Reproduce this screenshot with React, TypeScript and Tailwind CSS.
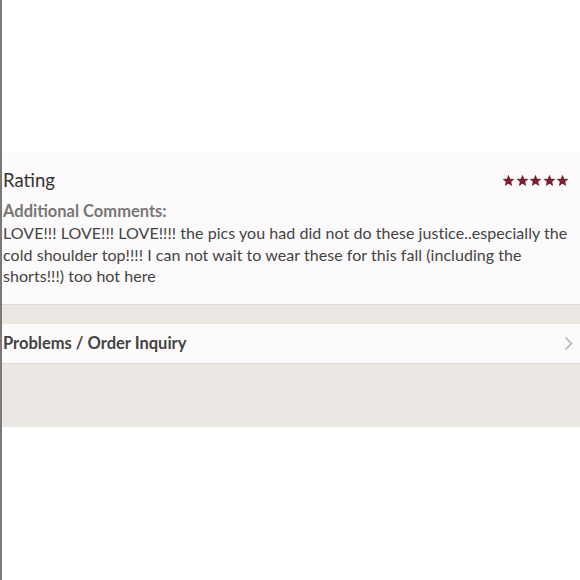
import React from "react";

function Star() {
  return (
    <svg width="13" height="13" viewBox="0 0 24 24" fill="#7b1e33">
      <path d="M12 1.5l3.1 7.2 7.8.6-5.9 5.1 1.8 7.6L12 18l-6.8 4 1.8-7.6-5.9-5.1 7.8-.6z" />
    </svg>
  );
}

export default function App() {
  return (
    <div className="w-[580px] h-[580px] bg-white flex" style={{ fontFamily: "Lato, 'Open Sans', sans-serif" }}>
      <div className="w-[2px] bg-[#7a7a7a] shrink-0" />
      <div className="flex-1 flex flex-col">
        <div className="h-[152px] bg-white" />
        <div className="bg-[#fcfafa] h-[153px] pl-[1px] pt-[16px] border-b border-[#dedad6]">
          <div className="flex items-center justify-between pr-[11px]">
            <span className="text-[18.5px] text-[#333] leading-[24px]">Rating</span>
            <div className="flex gap-[0.5px]">
              <Star /><Star /><Star /><Star /><Star />
            </div>
          </div>
          <div className="mt-[9px] text-[16.5px] font-bold text-[#777] leading-[21px]">Additional Comments:</div>
          <div className="text-[16px] text-[#444] leading-[21.5px] tracking-[0.05px]">
            LOVE!!! LOVE!!! LOVE!!!! the pics you had did not do these justice..especially the cold shoulder top!!!! I can not wait to wear these for this fall (including the shorts!!!) too hot here
          </div>
        </div>
        <div className="h-[19px] bg-[#ebe8e3]" />
        <div className="h-[40px] bg-[#fcfafa] border-b border-[#dedad6] flex items-center justify-between pl-[1px] pr-[7px]">
          <span className="text-[16.5px] font-bold text-[#444]">Problems / Order Inquiry</span>
          <svg width="9" height="15" viewBox="0 0 9 15" fill="none" stroke="#b5b5b5" strokeWidth="1.6">
            <path d="M1.5 1.5l6 6-6 6" />
          </svg>
        </div>
        <div className="h-[63px] bg-[#ebe8e3]" />
        <div className="flex-1 bg-white" />
      </div>
    </div>
  );
}
